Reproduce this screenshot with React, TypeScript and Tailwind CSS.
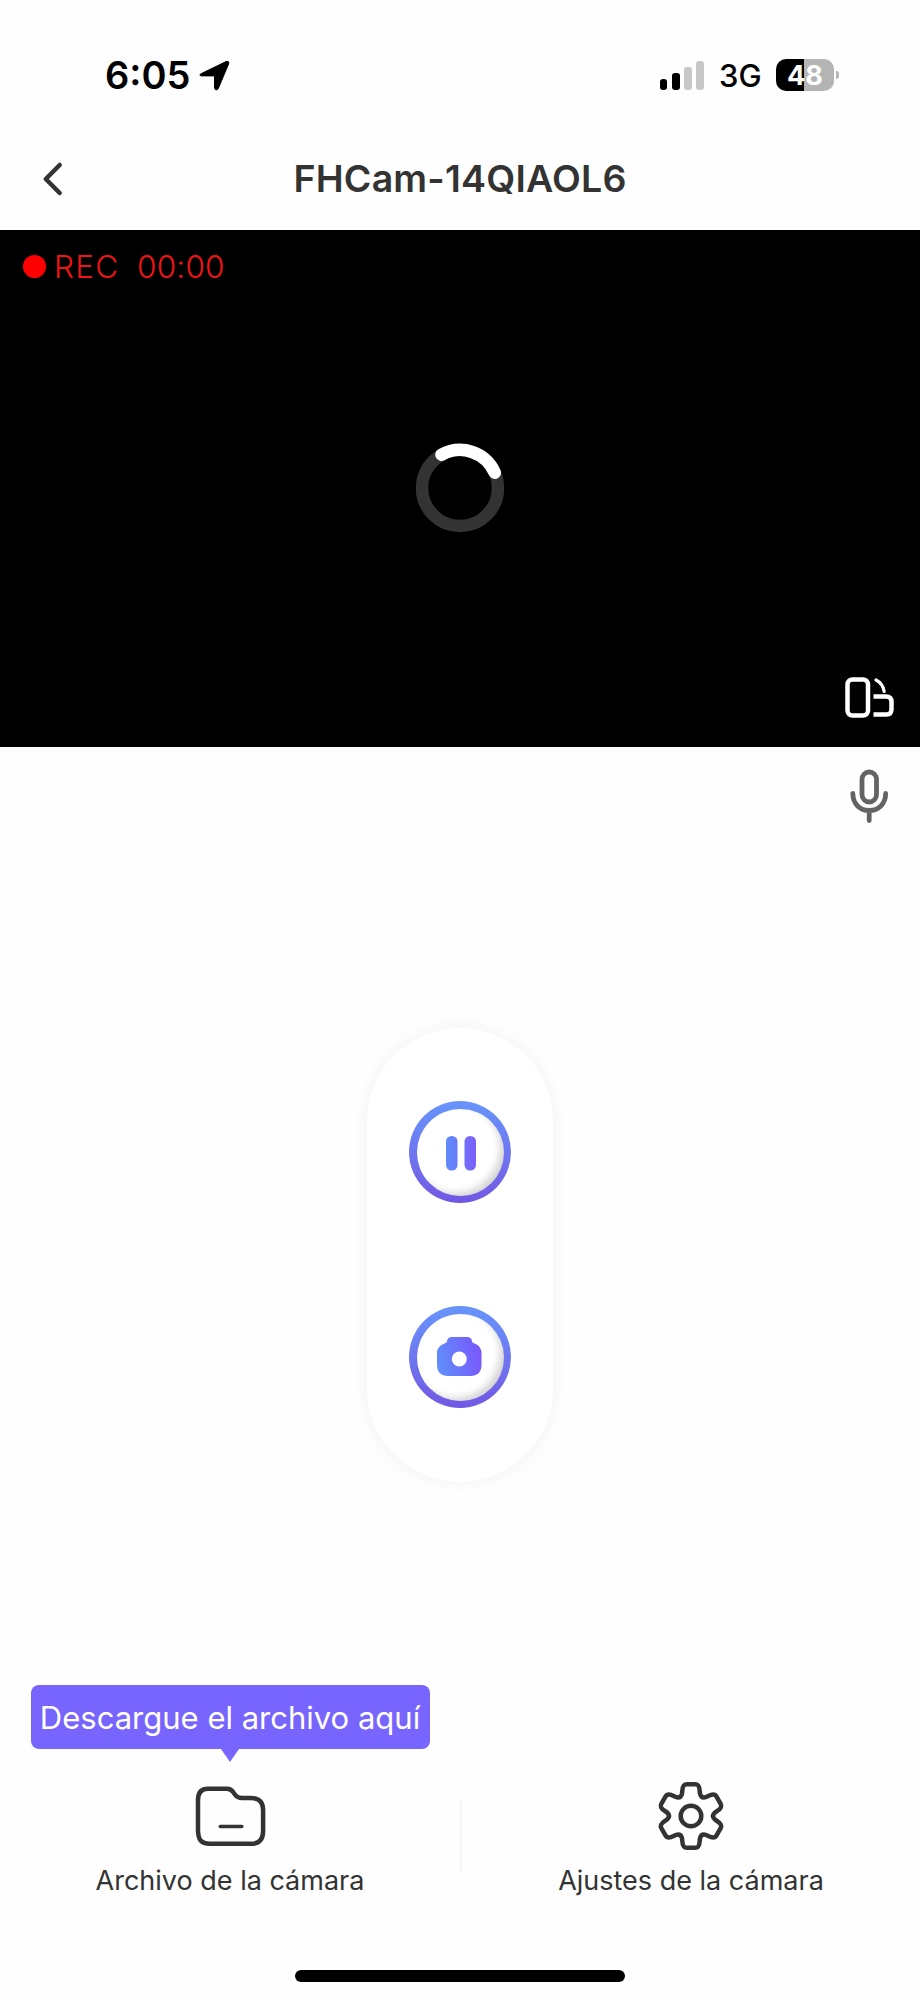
import type { ReactNode } from 'react';

const TEETH = [0, 60, 120, 180, 240, 300];

function StatusBar() {
  return (
    <div className="h-[128px] flex items-start justify-between pl-[105px] pr-[81px] text-black">
      <div className="flex items-center mt-[51px] h-12">
        <span className="w-[94px] text-[38px] leading-none font-semibold whitespace-nowrap">6:05</span>
        <svg width="31" height="31" viewBox="0 0 31 31">
          <path
            d="M2.5 13.5 27 1.6c2-.9 3.4.3 2.6 2.3L19.4 28.2c-.9 2.3-3.9 2-3.9-.5V16.9c0-.7-.3-1-1-1H3.2C.5 15.9 0 14.7 2.5 13.5Z"
            fill="currentColor"
            stroke="currentColor"
            strokeWidth="1"
          />
        </svg>
      </div>
      <div className="flex items-center mt-[51px] h-12">
        <div className="flex items-end gap-[4.5px] h-[29px]">
          <div className="w-[7.75px] h-[11px] rounded-[3px] bg-black" />
          <div className="w-[7.75px] h-[17px] rounded-[3px] bg-black" />
          <div className="w-[7.75px] h-[23px] rounded-[3px] bg-[#c8c8c8]" />
          <div className="w-[7.75px] h-[29px] rounded-[3px] bg-[#c8c8c8]" />
        </div>
        <span className="ml-[15px] w-[57px] text-[31px] leading-none font-medium whitespace-nowrap">3G</span>
        <div className="w-[58px] h-[32px] rounded-[10px] bg-linear-to-r from-black from-48% to-[#b4b4b4] to-48% flex items-center justify-center">
          <span className="text-[27px] leading-none font-bold text-white">48</span>
        </div>
        <div className="ml-[2px] w-[3px] h-[8px] rounded-r-full bg-[#b4b4b4]" />
      </div>
    </div>
  );
}

function Header() {
  return (
    <div className="h-[102px] grid grid-cols-[100px_1fr_100px] items-center text-[#333]">
      <button className="pl-[42px]">
        <svg width="22" height="36" viewBox="0 0 22 36" fill="none" stroke="currentColor" strokeWidth="4.5" strokeLinecap="round" strokeLinejoin="round">
          <path d="M17.7 4 3.8 18l13.9 14" />
        </svg>
      </button>
      <h1 className="text-center text-[37.5px] leading-none font-semibold tracking-[0.2px] whitespace-nowrap">FHCam-14QIAOL6</h1>
    </div>
  );
}

function VideoPanel() {
  return (
    <div className="h-[517px] bg-black flex flex-col justify-between">
      <div className="h-[73px] flex items-center pl-[23px] text-[#f01414]">
        <div className="size-[23px] rounded-full bg-[#f00]" />
        <span className="ml-[8px] w-[83px] text-[31.5px] leading-none font-light tracking-[1.2px] whitespace-nowrap">REC</span>
        <span className="text-[31.5px] leading-none font-light tracking-[0.2px] whitespace-nowrap">00:00</span>
      </div>
      <div className="h-[90px] mb-[3px] flex justify-center">
        <svg width="90" height="90" viewBox="-45 -45 90 90" fill="none">
          <circle r="38" stroke="#333" strokeWidth="12.5" />
          <path d="M-18.5-33.2A38 38 0 0 1 34.8-15.3" stroke="#fff" strokeWidth="12.5" strokeLinecap="round" />
        </svg>
      </div>
      <div className="flex justify-end pr-[24px] pb-[27px]">
        <svg width="52" height="44" viewBox="0 0 52 44" fill="none" stroke="#fff" strokeWidth="4.5">
          <rect x="3.5" y="3.5" width="20.5" height="36" rx="5" />
          <path d="M29.5 20.5H42c3.5 0 5.5 2 5.5 5.5v7c0 3.5-1.500 5.500-5 5.500h-13" />
          <path d="M32 4c4.500 2.200 7.200 6 8.200 11.500" strokeWidth="3.2" strokeLinecap="round" />
        </svg>
      </div>
    </div>
  );
}

function RoundButton({ children }: { children: ReactNode }) {
  return (
    <button className="size-[102px] p-[7.5px] rounded-full bg-linear-to-b from-[#6695fb] to-[#7257e4]">
      <span className="size-full rounded-full bg-white shadow-[inset_-6px_-5px_9px_-3px_rgba(0,0,0,0.2)] flex items-center justify-center">
        {children}
      </span>
    </button>
  );
}

function Controls() {
  return (
    <div className="w-[186px] h-[454px] mx-auto rounded-full bg-white shadow-[0_0_18px_rgba(0,0,0,0.05)] flex flex-col items-center justify-between pt-[73px] pb-[74px]">
      <RoundButton>
        <svg width="46" height="46" viewBox="0 0 46 46">
          <defs>
            <linearGradient id="pause" gradientUnits="userSpaceOnUse" x1="8" y1="0" x2="38" y2="0">
              <stop offset="0" stopColor="#5c8dfb" />
              <stop offset="1" stopColor="#7b61fb" />
            </linearGradient>
          </defs>
          <rect x="9" y="7" width="11.5" height="34.5" rx="5.5" fill="url(#pause)" />
          <rect x="27.5" y="7" width="11.5" height="34.5" rx="5.5" fill="url(#pause)" />
        </svg>
      </RoundButton>
      <RoundButton>
        <svg width="46" height="46" viewBox="0 0 46 46">
          <defs>
            <linearGradient id="camera" x1="0" y1="0.6" x2="1" y2="0.4">
              <stop offset="0" stopColor="#5f8ffb" />
              <stop offset="1" stopColor="#7a57fd" />
            </linearGradient>
          </defs>
          <path
            fill="url(#camera)"
            fillRule="evenodd"
            d="M15 3h15c3 0 4.5 1.3 5 4 .3 1.5 1 2 2.5 2.5C42 11 44.5 14.5 44.500 19v12c0 7-4 11-11 11h-22.5c-7 0-11-4-11-11V19c0-4.5 3-8 7.500-9.500C9 9 9.700 8.500 10 7c.5-2.700 2-4 5-4ZM22.300 17.500a7.500 7.500 0 1 0 0 15 7.500 7.500 0 0 0 0-15Z"
          />
        </svg>
      </RoundButton>
    </div>
  );
}

function FolderIcon() {
  return (
    <svg width="72" height="72" viewBox="0 0 72 72" fill="none" stroke="currentColor" strokeWidth="4.5" strokeLinecap="round" strokeLinejoin="round">
      <path d="M14 8.800H33c3 0 4.600 1 6.300 3.500l1.600 2.200c2 2.700 3.800 3.500 7 3.500h9c8 0 12.200 4 12.200 12v21c0 8.500-4 12.800-12 12.800H15.800C6.800 63.800 4.300 59.500 4 50.500V20C4 13 7.300 8.800 14 8.800Z" />
      <path d="M26.300 46.500h21.500" strokeWidth="3.6" />
    </svg>
  );
}

function GearIcon() {
  return (
    <svg width="72" height="72" viewBox="-36 -36 72 72" fill="none" stroke="currentColor" strokeWidth="4.5" strokeLinecap="round">
      <circle r="10.3" />
      {TEETH.map((deg) => (
        <path
          key={deg}
          transform={`rotate(${deg})`}
          d="M-11-19.050C-9.200-20.100-8.800-22-8.700-25-8.500-29.500-7.500-31.800-4-31.800H4C7.500-31.800 8.500-29.500 8.700-25 8.800-22 9.200-20.100 11-19.050"
        />
      ))}
    </svg>
  );
}

function Tab({ icon, label }: { icon: ReactNode; label: string }) {
  return (
    <button className="flex flex-col items-center text-[#333]">
      {icon}
      <span className="mt-[12px] text-[27px] leading-[34px] whitespace-nowrap">{label}</span>
    </button>
  );
}

export default function App() {
  return (
    <div className="w-[920px] h-[2000px] overflow-hidden bg-[#fefefe] flex flex-col font-['Inter',sans-serif]">
      <StatusBar />
      <Header />
      <VideoPanel />
      <div className="h-[281px] flex items-start justify-end pt-[20px] pr-[29px]">
        <svg width="44" height="58" viewBox="0 0 44 58" fill="none" stroke="#636363" strokeWidth="4.8" strokeLinecap="round">
          <rect x="15" y="5" width="14.5" height="30" rx="7.25" />
          <path d="M5.8 26.5C6 37 13 43.5 22.2 43.5S38.500 37 38.700 26.500M22.200 43.500v10" />
        </svg>
      </div>
      <Controls />
      <div className="mt-[203px] ml-[30.5px] w-[399px]">
        <div className="h-[64px] rounded-[8px] bg-[#7865fd] flex items-center justify-center text-[31px] leading-none text-white whitespace-nowrap">
          Descargue el archivo aquí
        </div>
        <svg className="mx-auto" width="18" height="13" viewBox="0 0 18 13">
          <path d="M0 0h18L9 13Z" fill="#7865fd" />
        </svg>
      </div>
      <div className="mt-[18px] grid grid-cols-[460px_2px_458px] items-start">
        <Tab icon={<FolderIcon />} label="Archivo de la cámara" />
        <div className="mt-[20px] h-[72px] bg-[#f6f6f6]" />
        <Tab icon={<GearIcon />} label="Ajustes de la cámara" />
      </div>
      <div className="mt-auto mb-[18px] mx-auto w-[330px] h-[12px] rounded-full bg-black" />
    </div>
  );
}
